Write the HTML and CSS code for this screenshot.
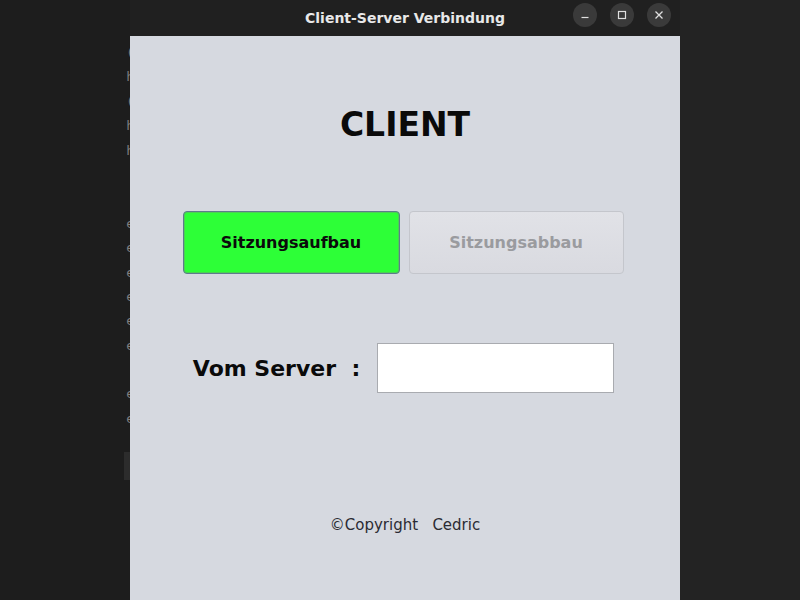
FILE: index.html
```html
<!DOCTYPE html>
<html lang="de">
<head>
<meta charset="utf-8">
<title>Client-Server Verbindung</title>
<link rel="stylesheet" href="styles.css">
</head>
<body>
<div class="desktop">
  <div class="behind">
    <div class="bg-line">(</div>
    <div class="bg-line">h</div>
    <div class="bg-line">(</div>
    <div class="bg-line">h</div>
    <div class="bg-line">h</div>
    <div class="bg-line"></div>
    <div class="bg-line"></div>
    <div class="bg-line">e</div>
    <div class="bg-line">e</div>
    <div class="bg-line">e</div>
    <div class="bg-line">e</div>
    <div class="bg-line">e</div>
    <div class="bg-line">e</div>
    <div class="bg-line"></div>
    <div class="bg-line">e</div>
    <div class="bg-line">e</div>
    <div class="bg-bar"></div>
  </div>
  <div class="window">
    <div class="titlebar">
      <div class="title">Client-Server Verbindung</div>
      <div class="controls">
        <span class="ctl"><svg width="10" height="10" viewBox="0 0 10 10"><path d="M1.5 7.5h7" stroke="#e0e0e0" stroke-width="1.2"/></svg></span>
        <span class="ctl"><svg width="10" height="10" viewBox="0 0 10 10"><rect x="1.5" y="1.5" width="7" height="7" fill="none" stroke="#e0e0e0" stroke-width="1.2"/></svg></span>
        <span class="ctl"><svg width="10" height="10" viewBox="0 0 10 10"><path d="M1.5 1.5l7 7M8.5 1.5l-7 7" stroke="#e0e0e0" stroke-width="1.3"/></svg></span>
      </div>
    </div>
    <div class="content">
      <h1 class="heading">CLIENT</h1>
      <div class="buttons">
        <button class="btn btn-active">Sitzungsaufbau</button>
        <button class="btn btn-disabled">Sitzungsabbau</button>
      </div>
      <div class="server-row">
        <span class="server-label">Vom Server&nbsp;&nbsp;:</span>
        <input class="server-field" type="text">
      </div>
      <div class="copyright">©Copyright&nbsp;&nbsp; Cedric</div>
    </div>
  </div>
  <div class="behind-right"></div>
</div>
</body>
</html>
```
FILE: styles.css
```css
html, body {
  margin: 0;
  padding: 0;
  width: 800px;
  height: 600px;
  overflow: hidden;
  background: #1d1d1d;
}
.desktop {
  display: flex;
  width: 800px;
  height: 600px;
}
.behind {
  width: 130px;
  flex: none;
  padding-top: 41px;
  box-sizing: border-box;
  font-family: "DejaVu Sans Mono", monospace;
  font-size: 13px;
  color: #7d7d7d;
  text-align: right;
  overflow: hidden;
}
.bg-line {
  height: 24.4px;
  line-height: 24px;
  margin-right: -4px;
}
.bg-bar {
  margin-top: 21px;
  margin-left: 124px;
  width: 6px;
  height: 28px;
  background: #2c2c2c;
}
.window {
  width: 550px;
  flex: none;
  height: 600px;
  display: flex;
  flex-direction: column;
}
.behind-right {
  flex: 1;
  background: #232323;
}
.titlebar {
  height: 36px;
  flex: none;
  background: #202020;
  display: flex;
  align-items: center;
  justify-content: center;
  position: relative;
}
.title {
  font-family: "DejaVu Sans", sans-serif;
  font-weight: bold;
  font-size: 14px;
  color: #e8e8e8;
}
.controls {
  position: absolute;
  right: 9px;
  top: 3px;
  display: flex;
  gap: 13px;
}
.ctl {
  width: 24px;
  height: 24px;
  border-radius: 50%;
  background: #3a3a3a;
  display: flex;
  align-items: center;
  justify-content: center;
}
.content {
  flex: 1;
  background: #d6d9e0;
  display: flex;
  flex-direction: column;
  align-items: center;
}
.heading {
  margin: 69px 0 0 0;
  height: 40px;
  line-height: 40px;
  font-family: "DejaVu Sans", sans-serif;
  font-weight: bold;
  font-size: 33px;
  color: #0a0a0a;
}
.buttons {
  margin-top: 66px;
  display: flex;
  gap: 9px;
  margin-left: -4px;
}
.btn {
  height: 63px;
  font-family: "DejaVu Sans", sans-serif;
  font-weight: bold;
  font-size: 16px;
  border-radius: 4px;
  padding: 0;
}
.btn-active {
  width: 217px;
  background: #2dff37;
  color: #0b0b0b;
  border: 1px solid #5e7a8e;
  box-shadow: inset 0 0 0 1px #4bd152;
}
.btn-disabled {
  width: 215px;
  background: linear-gradient(#e1e2e7, #d9dae0);
  color: #9a9b9f;
  border: 1px solid #c4c6cc;
}
.server-row {
  margin-top: 69px;
  display: flex;
  align-items: center;
  gap: 17px;
  margin-left: -3px;
}
.server-label {
  font-family: "DejaVu Sans", sans-serif;
  font-weight: bold;
  font-size: 22px;
  color: #0a0a0a;
}
.server-field {
  width: 237px;
  height: 50px;
  box-sizing: border-box;
  border: 1px solid #a9abb0;
  background: #ffffff;
  margin: 0;
  padding: 0;
}
.copyright {
  margin-top: 122px;
  font-family: "DejaVu Sans", sans-serif;
  font-size: 15px;
  line-height: 20px;
  color: #2b2b33;
}
```
